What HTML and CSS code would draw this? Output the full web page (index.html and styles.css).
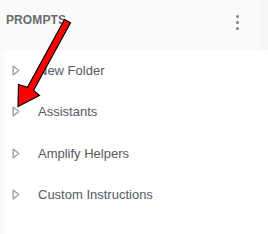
FILE: index.html
```html
<!DOCTYPE html>
<html>
<head>
<meta charset="utf-8">
<link rel="stylesheet" href="styles.css">
</head>
<body>
<div class="panel">
  <div class="header">
    <span class="title">PROMPTS</span>
    <span class="kebab"><i></i><i></i><i></i></span>
    <span class="edge-right"></span>
  </div>
  <div class="body">
    <div class="edge-left"></div>
    <ul class="list">
      <li class="row"><svg class="tri" width="8" height="11" viewBox="0 0 8 11"><path d="M1.2 1.2 L6.8 5.5 L1.2 9.8 Z" fill="none" stroke="#a4a4ac" stroke-width="1.5" stroke-linejoin="round"/></svg><span>New Folder</span></li>
      <li class="row"><svg class="tri" width="8" height="11" viewBox="0 0 8 11"><path d="M1.2 1.2 L6.8 5.5 L1.2 9.8 Z" fill="none" stroke="#a4a4ac" stroke-width="1.5" stroke-linejoin="round"/></svg><span>Assistants</span></li>
      <li class="row"><svg class="tri" width="8" height="11" viewBox="0 0 8 11"><path d="M1.2 1.2 L6.8 5.5 L1.2 9.8 Z" fill="none" stroke="#a4a4ac" stroke-width="1.5" stroke-linejoin="round"/></svg><span>Amplify Helpers</span></li>
      <li class="row"><svg class="tri" width="8" height="11" viewBox="0 0 8 11"><path d="M1.2 1.2 L6.8 5.5 L1.2 9.8 Z" fill="none" stroke="#a4a4ac" stroke-width="1.5" stroke-linejoin="round"/></svg><span>Custom Instructions</span></li>
    </ul>
  </div>
  <svg class="arrow" width="268" height="234" viewBox="0 0 268 234">
    <path d="M64.5 19.5 L70.5 22.8 L33.5 90.5 L39.5 95.5 L18 106.5 L18.5 84.5 L27.5 87.2 Z" fill="#f00" stroke="#000" stroke-width="1.2" stroke-linejoin="miter"/>
  </svg>
</div>
</body>
</html>
```
FILE: styles.css
```css
html, body {
  margin: 0;
  padding: 0;
  background: #ffffff;
}
.panel {
  position: relative;
  width: 268px;
  height: 234px;
  overflow: hidden;
  display: flex;
  flex-direction: column;
  font-family: "Liberation Sans", Arial, sans-serif;
}
.header {
  height: 50px;
  flex: none;
  background: #fafafa;
  display: flex;
  align-items: center;
  padding-left: 6px;
  box-sizing: border-box;
}
.title {
  font-size: 12px;
  font-weight: bold;
  color: #6b6b6b;
  flex: 1;
  margin-top: -10px;
  letter-spacing: 0.1px;
}
.kebab {
  display: flex;
  flex-direction: column;
  gap: 3px;
  margin-right: 21px;
  margin-top: -6px;
}
.kebab i {
  display: block;
  width: 3px;
  height: 3px;
  border-radius: 50%;
  background: #808080;
}
.edge-right {
  align-self: stretch;
  width: 8px;
  background: #f5f5f5;
}
.body {
  display: flex;
  flex: 1;
}
.edge-left {
  width: 4px;
  background: #fafafa;
}
.list {
  list-style: none;
  margin: 0;
  padding: 0 0 0 8px;
  flex: 1;
}
.row {
  height: 41.3px;
  display: flex;
  align-items: center;
  font-size: 13px;
  color: #555a63;
}
.tri {
  display: block;
  margin-right: 18px;
}
.arrow {
  position: absolute;
  left: 0;
  top: 0;
}
```
